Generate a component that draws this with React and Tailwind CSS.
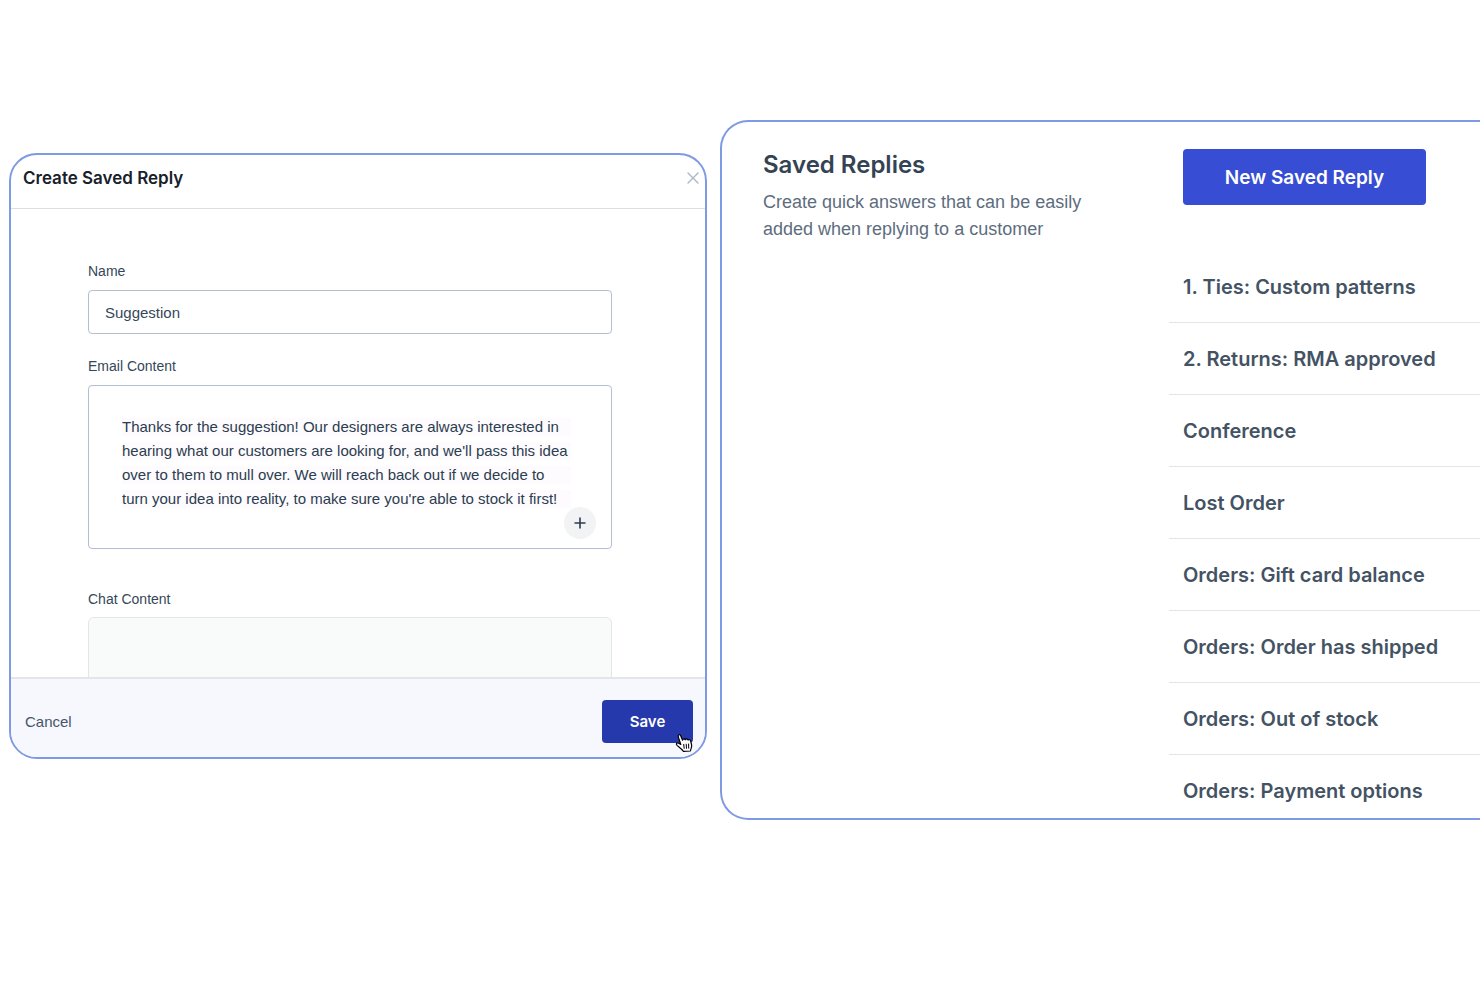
import React, { useState } from 'react';

const SAVED_REPLIES = [
  '1. Ties: Custom patterns',
  '2. Returns: RMA approved',
  'Conference',
  'Lost Order',
  'Orders: Gift card balance',
  'Orders: Order has shipped',
  'Orders: Out of stock',
  'Orders: Payment options',
];

const SUGGESTION_TEXT =
  "Thanks for the suggestion! Our designers are always interested in hearing what our customers are looking for, and we'll pass this idea over to them to mull over. We will reach back out if we decide to turn your idea into reality, to make sure you're able to stock it first!";

function HandCursor() {
  return (
    <svg
      className="pointer-events-none absolute right-0 -bottom-2.5 h-5 w-[18px]"
      viewBox="0 0 18 20"
      aria-hidden="true"
    >
      <path
        d="M5.8 11.4 L3.2 3.8 C2.6 1.6 4.9 .9 5.7 2.8 L7.6 7.2 C7.9 5.7 9.8 5.6 10.3 6.8 C11 5.6 12.6 5.7 13 7 C14 6.2 15.4 6.7 15.7 8 L16.6 12 C17 14.2 15.8 15.6 15.4 18 L8.4 18.4 C7.6 16.6 4.6 14.6 2.1 12.4 C.6 10.8 1.7 9.1 3.7 10.2 Z"
        fill="#fff"
        stroke="#000"
        strokeWidth="1.2"
        strokeLinejoin="round"
      />
      <path d="M8.7 11 L9.2 15.8 M11.2 10.8 L11.5 15.7 M13.6 10.6 L13.7 15.6" stroke="#000" strokeWidth="1" />
    </svg>
  );
}

function CreateReplyDialog() {
  const [name, setName]       = useState('Suggestion');
  const [content, setContent] = useState(SUGGESTION_TEXT);

  return (
    <section className="mt-[33px] min-w-0 overflow-hidden rounded-[28px] border-2 border-[#7f9ae4] bg-white">
      {/* Header */}
      <header className="flex items-center justify-between border-b border-[#dcdfe2] pt-[11px] pr-1.5 pb-[18px] pl-3">
        <h2 className="font-['Inter',sans-serif] text-[17px] leading-6 font-semibold text-[#17212b]">Create Saved Reply</h2>
        <button type="button" aria-label="Close" className="text-[#a9b6cc]">
          <svg className="size-3" viewBox="0 0 12 12" fill="none" stroke="currentColor" strokeWidth="1.4" strokeLinecap="round">
            <path d="M1 1 L11 11 M11 1 L1 11" />
          </svg>
        </button>
      </header>

      {/* Fields */}
      <div className="h-[468px] overflow-hidden pt-[52px] pr-[93px] pl-[77px] text-[14px] leading-5 text-[#35475a]">
        <label htmlFor="reply-name" className="block">Name</label>
        <input
          id="reply-name"
          type="text"
          value={name}
          onChange={e => setName(e.target.value)}
          className="mt-[9px] block h-11 w-full rounded-[4px] border border-[#b3bfd1] px-4 text-[15px] focus:outline-none"
        />

        <label htmlFor="reply-email" className="mt-[22px] block">Email Content</label>
        <div className="relative mt-[9px]">
          <textarea
            id="reply-email"
            value={content}
            onChange={e => setContent(e.target.value)}
            className="block h-[164px] w-full resize-none overflow-hidden rounded-[4px] border border-[#b3bfd1] bg-[repeating-linear-gradient(#fff_0_3px,#fdfbfe_3px_21px,#fff_21px_24px)] bg-clip-content bg-origin-content pt-[29px] pr-10 pb-[37px] pl-[33px] text-[15px] leading-6 text-[#2b3d4f] focus:outline-none"
          />
          <button
            type="button"
            aria-label="Insert"
            className="absolute right-4 bottom-2.5 flex size-8 items-center justify-center rounded-full bg-[#f1f3f4] text-[#2b3d4f]"
          >
            <svg className="size-3" viewBox="0 0 12 12" fill="none" stroke="currentColor" strokeWidth="1.6">
              <path d="M6 .5 V11.5 M.5 6 H11.5" />
            </svg>
          </button>
        </div>

        <label htmlFor="reply-chat" className="mt-10 block">Chat Content</label>
        <textarea
          id="reply-chat"
          className="mt-2 block h-40 w-full resize-none rounded-[6px] border border-[#e3e6e7] bg-[#f9fafa] focus:outline-none"
        />
      </div>

      {/* Footer */}
      <footer className="flex items-center justify-between border-t-2 border-[#e3e5e9] bg-[#f7f8fd] pt-[21px] pr-3 pb-3.5 pl-3.5 text-[15px]">
        <button type="button" className="pt-0.5 text-[#44566a]">Cancel</button>
        <div className="relative">
          <button type="submit" className="h-[43px] w-[91px] rounded-[4px] bg-[#2539ac] pt-0.5 font-['Inter',sans-serif] font-semibold text-white">
            Save
          </button>
          <HandCursor />
        </div>
      </footer>
    </section>
  );
}

function SavedRepliesPanel() {
  return (
    <section className="flex min-w-0 overflow-hidden rounded-l-[28px] border-2 border-r-0 border-[#7f9ae4] bg-white pt-[27px] pl-[41px]">
      <div className="min-w-0 flex-1">
        <h1 className="font-['Inter',sans-serif] text-[24px] leading-8 font-semibold text-[#334354]">Saved Replies</h1>
        <p className="mt-2 w-[350px] text-[18px] leading-[27px] text-[#5d6d7e]">
          Create quick answers that can be easily added when replying to a customer
        </p>
      </div>
      <div className="w-[311px] shrink-0 font-['Inter',sans-serif]">
        <button type="button" className="ml-3.5 h-14 w-[243px] rounded-[4px] bg-[#374dd3] pt-0.5 text-[19px] font-semibold text-white">
          New Saved Reply
        </button>
        <ul className="mt-[46px] text-[20px] leading-8 font-semibold text-[#445364]">
          {SAVED_REPLIES.map(reply => (
            <li key={reply} className="border-b border-[#dfe5ea] pt-5 pb-[19px] pl-3.5 whitespace-nowrap last:border-b-0 last:pb-[11px]">
              {reply}
            </li>
          ))}
        </ul>
      </div>
    </section>
  );
}

export default function App() {
  return (
    <main className="grid min-h-screen grid-cols-[698fr_760fr] items-start gap-[13px] bg-white pt-[120px] pl-[9px] font-['Liberation_Sans',Arial,sans-serif]">
      <CreateReplyDialog />
      <SavedRepliesPanel />
    </main>
  );
}
